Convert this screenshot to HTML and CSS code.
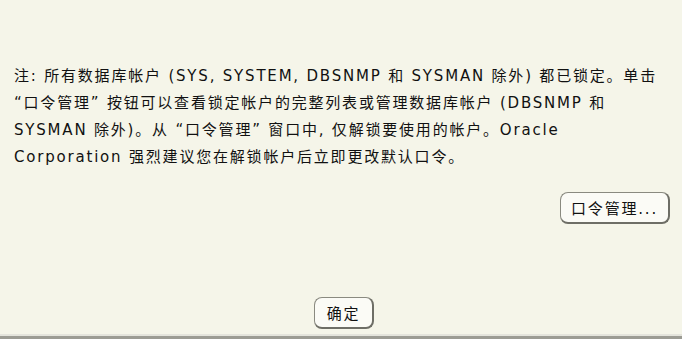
FILE: index.html
```html
<!DOCTYPE html>
<html>
<head>
<meta charset="utf-8">
<link rel="stylesheet" href="styles.css">
</head>
<body>
<div class="dialog">
  <p class="note">注: 所有数据库帐户 (SYS, SYSTEM, DBSNMP 和 SYSMAN 除外) 都已锁定。单击<br>“口令管理” 按钮可以查看锁定帐户的完整列表或管理数据库帐户 (DBSNMP 和<br>SYSMAN 除外)。从 “口令管理” 窗口中, 仅解锁要使用的帐户。Oracle<br>Corporation 强烈建议您在解锁帐户后立即更改默认口令。</p>
  <div class="row-right"><button class="btn btn-pw">口令管理...</button></div>
  <div class="row-center"><button class="btn btn-ok">确定</button></div>
</div>
<div class="bottom-edge"></div>
</body>
</html>
```
FILE: styles.css
```css
html, body {
  margin: 0;
  padding: 0;
  background: #f5f5e9;
  width: 682px;
  height: 339px;
  overflow: hidden;
}
.dialog {
  height: 334px;
  display: flex;
  flex-direction: column;
  box-sizing: border-box;
  padding: 63px 12px 0 14px;
  font-family: "DejaVu Sans", "Noto Sans CJK SC", sans-serif;
  color: #111;
}
.note {
  margin: 0;
  font-size: 15px;
  letter-spacing: 1.8px;
  line-height: 27px;
  white-space: nowrap;
}
.row-right {
  display: flex;
  justify-content: flex-end;
  margin-top: 21px;
}
.row-center {
  display: flex;
  justify-content: center;
  margin-top: 73px;
}
.btn {
  font-family: "DejaVu Sans", "Noto Sans CJK SC", sans-serif;
  font-size: 15px;
  letter-spacing: 1.8px;
  color: #111;
  background: #fbfbf6;
  border: 1px solid #8a8a80;
  border-right: 2px solid #6e6e66;
  border-bottom: 2px solid #6e6e66;
  border-radius: 8px;
  height: 32px;
  padding: 0;
}
.btn-pw { width: 110px; }
.btn-ok { width: 60px; margin-left: 4px; }
.bottom-edge {
  height: 5px;
  background: linear-gradient(#e4e4dc 0 2px, #9c9c94 2px 5px);
}
```
